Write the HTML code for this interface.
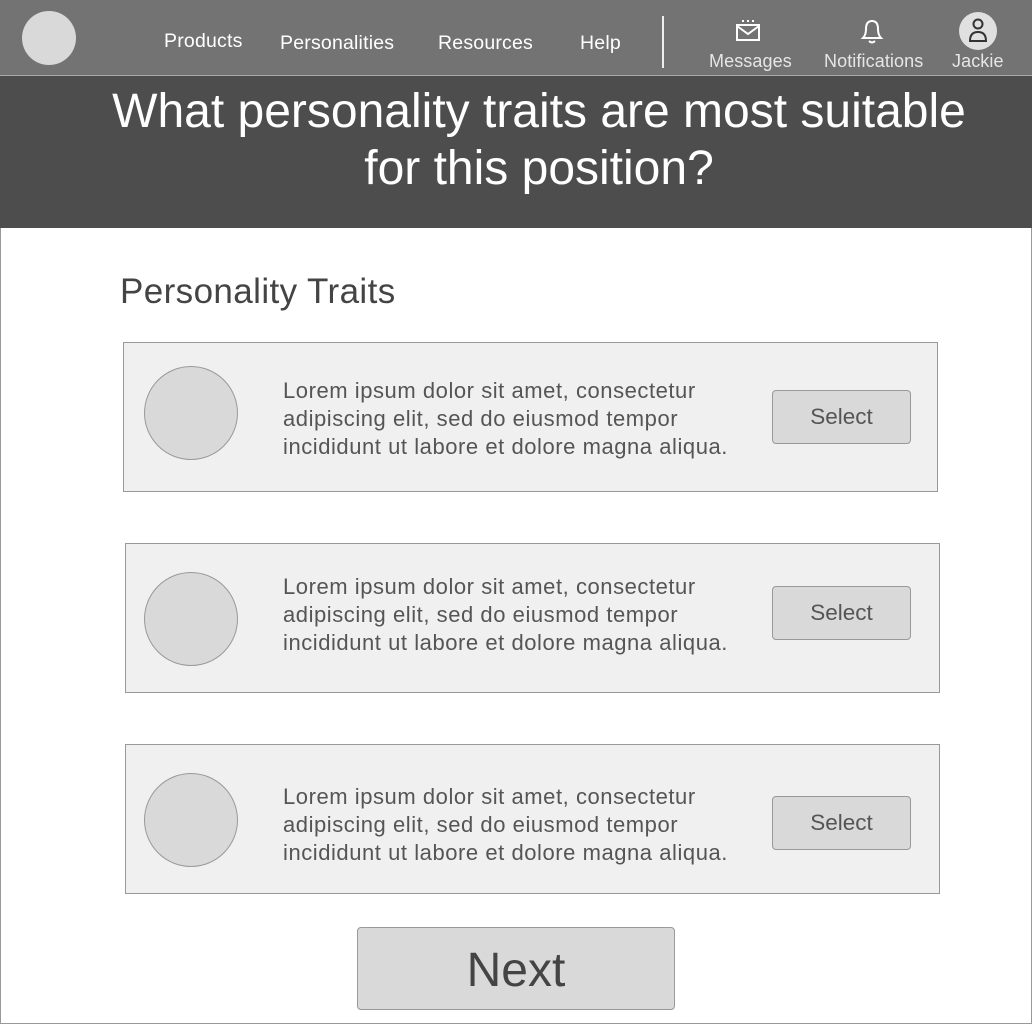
<!DOCTYPE html>
<html><head><meta charset="utf-8"><style>
*{margin:0;padding:0;box-sizing:border-box}
body{width:1032px;height:1024px;position:relative;background:#fff;font-family:"Liberation Sans",sans-serif;overflow:hidden}
.abs{position:absolute}
.nav{left:0;top:0;width:1032px;height:76px;background:#737373;border-bottom:1px solid #aaa}
.navt{color:#fff;font-size:19.5px;letter-spacing:0.2px;top:30px}
.lab{color:#e6e6e6;font-size:18px;top:51px;letter-spacing:0.1px}
.hdr{left:0;top:76px;width:1032px;height:152px;background:#4d4d4d;color:#fff;font-size:48px;text-align:center;line-height:57px;padding-top:7px;padding-left:46px}
.frame{left:0;top:228px;width:1032px;height:796px;border:1px solid #999;border-top:none}
.card{width:815px;height:150px;background:#f0f0f0;border:1px solid #999}
.circ{left:20px;top:23px;width:94px;height:94px;border-radius:50%;background:#d9d9d9;border:1px solid #999}
.txt{left:159px;top:34px;font-size:22px;letter-spacing:0.55px;line-height:28px;color:#555;white-space:nowrap}
.btn{left:648px;top:47px;width:139px;height:54px;background:#d9d9d9;border:1px solid #999;border-radius:4px;font-size:22.5px;color:#555;text-align:center;line-height:52px}
</style></head><body>
<div class="abs nav">
  <div class="abs" style="left:22px;top:11px;width:54px;height:54px;border-radius:50%;background:#d9d9d9"></div>
  <div class="abs navt" style="left:164px">Products</div>
  <div class="abs navt" style="left:280px;top:32px">Personalities</div>
  <div class="abs navt" style="left:438px;top:32px">Resources</div>
  <div class="abs navt" style="left:580px;top:32px">Help</div>
  <div class="abs" style="left:662px;top:16px;width:2px;height:52px;background:#eee"></div>
  <svg class="abs" style="left:734px;top:18px" width="28" height="26" viewBox="0 0 28 26" fill="none" stroke="#fff" stroke-width="2">
    <rect x="3" y="7" width="22" height="15"/><path d="M3 8 L14 16 L25 8"/><path d="M9 2v2M14 2v2M19 2v2"/>
  </svg>
  <svg class="abs" style="left:858px;top:16px" width="28" height="30" viewBox="0 0 28 30" fill="none" stroke="#fff" stroke-width="2">
    <path d="M5 22 Q8 19 8 13 Q8 5 14 5 Q20 5 20 13 Q20 19 23 22 Z"/><path d="M11 25 Q14 28 17 25"/>
  </svg>
  <div class="abs" style="left:959px;top:12px;width:38px;height:38px;border-radius:50%;background:#e0e0e0"></div>
  <svg class="abs" style="left:964px;top:15px" width="28" height="32" viewBox="0 0 28 32" fill="none" stroke="#333" stroke-width="2">
    <circle cx="14" cy="9" r="4.5"/><path d="M6 26 Q6 17 14 17 Q22 17 22 26 Z"/>
  </svg>
  <div class="abs lab" style="left:709px">Messages</div>
  <div class="abs lab" style="left:824px">Notifications</div>
  <div class="abs lab" style="left:952px">Jackie</div>
</div>
<div class="abs hdr">What personality traits are most suitable<br>for this position?</div>
<div class="abs frame"></div>
<div class="abs" style="left:120px;top:272px;font-size:35px;letter-spacing:0.4px;color:#444">Personality Traits</div>

<div class="abs card" style="left:123px;top:342px">
  <div class="abs circ"></div>
  <div class="abs txt">Lorem ipsum dolor sit amet, consectetur<br>adipiscing elit, sed do eiusmod tempor<br>incididunt ut labore et dolore magna aliqua.</div>
  <div class="abs btn">Select</div>
</div>
<div class="abs card" style="left:125px;top:543px">
  <div class="abs circ" style="left:18px;top:28px"></div>
  <div class="abs txt" style="left:157px;top:29px">Lorem ipsum dolor sit amet, consectetur<br>adipiscing elit, sed do eiusmod tempor<br>incididunt ut labore et dolore magna aliqua.</div>
  <div class="abs btn" style="left:646px;top:42px">Select</div>
</div>
<div class="abs card" style="left:125px;top:744px">
  <div class="abs circ" style="left:18px;top:28px"></div>
  <div class="abs txt" style="left:157px;top:38px">Lorem ipsum dolor sit amet, consectetur<br>adipiscing elit, sed do eiusmod tempor<br>incididunt ut labore et dolore magna aliqua.</div>
  <div class="abs btn" style="left:646px;top:51px">Select</div>
</div>

<div class="abs" style="left:357px;top:927px;width:318px;height:83px;background:#d9d9d9;border:1px solid #999;border-radius:4px;font-size:48px;color:#444;text-align:center;line-height:86px">Next</div>
</body></html>
